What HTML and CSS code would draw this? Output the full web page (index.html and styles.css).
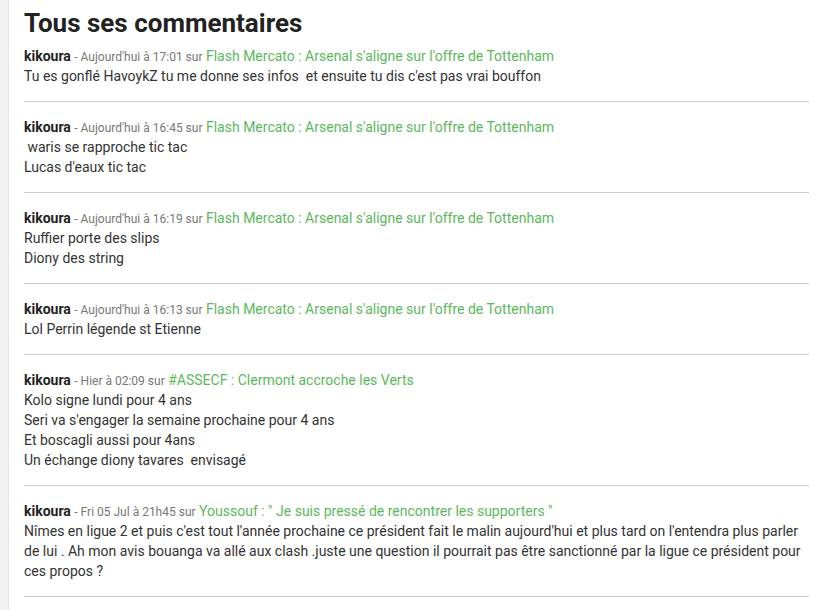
FILE: index.html
```html
<!DOCTYPE html>
<html lang="fr">
<head>
<meta charset="utf-8">
<link rel="stylesheet" href="styles.css">
</head>
<body>
<div class="page">
  <aside class="strip"></aside>
  <main class="content">
    <h1 class="title">Tous ses commentaires</h1>
    <ul class="list">
      <li class="item">
        <div class="meta"><span class="user">kikoura</span> <span class="date">- Aujourd'hui à 17:01 sur</span> <a class="link" href="#">Flash Mercato : Arsenal s'aligne sur l'offre de Tottenham</a></div>
        <div class="text">Tu es gonflé HavoykZ tu me donne ses infos  et ensuite tu dis c'est pas vrai bouffon</div>
      </li>
      <li class="item">
        <div class="meta"><span class="user">kikoura</span> <span class="date">- Aujourd'hui à 16:45 sur</span> <a class="link" href="#">Flash Mercato : Arsenal s'aligne sur l'offre de Tottenham</a></div>
        <div class="text"> waris se rapproche tic tac
Lucas d'eaux tic tac</div>
      </li>
      <li class="item">
        <div class="meta"><span class="user">kikoura</span> <span class="date">- Aujourd'hui à 16:19 sur</span> <a class="link" href="#">Flash Mercato : Arsenal s'aligne sur l'offre de Tottenham</a></div>
        <div class="text">Ruffier porte des slips
Diony des string</div>
      </li>
      <li class="item">
        <div class="meta"><span class="user">kikoura</span> <span class="date">- Aujourd'hui à 16:13 sur</span> <a class="link" href="#">Flash Mercato : Arsenal s'aligne sur l'offre de Tottenham</a></div>
        <div class="text">Lol Perrin légende st Etienne</div>
      </li>
      <li class="item">
        <div class="meta"><span class="user">kikoura</span> <span class="date">- Hier à 02:09 sur</span> <a class="link" href="#">#ASSECF : Clermont accroche les Verts</a></div>
        <div class="text">Kolo signe lundi pour 4 ans
Seri va s'engager la semaine prochaine pour 4 ans
Et boscagli aussi pour 4ans
Un échange diony tavares  envisagé</div>
      </li>
      <li class="item">
        <div class="meta"><span class="user">kikoura</span> <span class="date">- Fri 05 Jul à 21h45 sur</span> <a class="link" href="#">Youssouf : " Je suis pressé de rencontrer les supporters "</a></div>
        <div class="text">Nîmes en ligue 2 et puis c'est tout l'année prochaine ce président fait le malin aujourd'hui et plus tard on l'entendra plus parler de lui . Ah mon avis bouanga va allé aux clash .juste une question il pourrait pas être sanctionné par la ligue ce président pour ces propos ?</div>
      </li>
    </ul>
  </main>
</div>
</body>
</html>
```

FILE: styles.css
```css
html, body {
  margin: 0;
  padding: 0;
  background: #ffffff;
}

body {
  font-family: Roboto, "Liberation Sans", Arial, sans-serif;
  color: #333333;
}

.page {
  display: flex;
  min-height: 610px;
}

.strip {
  width: 8px;
  flex: 0 0 8px;
  background: #f1f1f1;
  border-right: 1px solid #e6e6e6;
}

.content {
  flex: 0 0 785px;
  margin-left: 15px;
}

.title {
  margin: 6px 0 6px;
  font-size: 26px;
  line-height: 34px;
  font-weight: 700;
  color: #222222;
}

.list {
  list-style: none;
  margin: 0;
  padding: 0;
}

.item {
  padding: 0 0 15px;
  margin-bottom: 15px;
  border-bottom: 1px solid #cccccc;
}

.meta {
  font-size: 14px;
  line-height: 20px;
  height: 20px;
}

.user {
  font-weight: 700;
  color: #222222;
}

.date {
  font-size: 12px;
  color: #777777;
}

.link {
  color: #5cb85c;
  text-decoration: none;
}

.text {
  font-size: 14px;
  line-height: 20px;
  color: #333333;
  white-space: pre-wrap;
}
```
